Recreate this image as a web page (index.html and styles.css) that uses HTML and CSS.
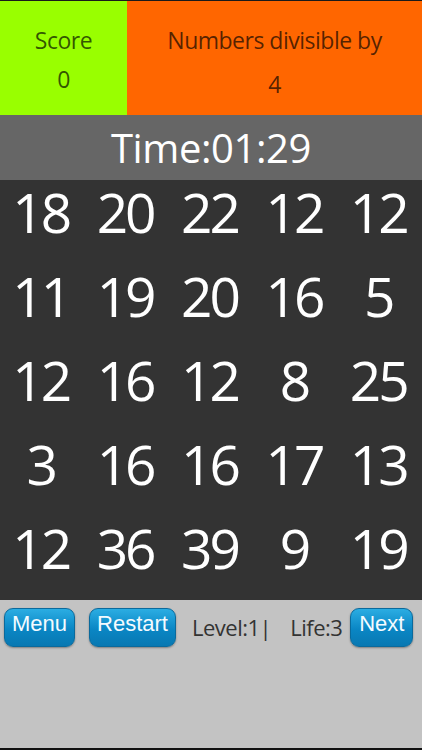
FILE: index.html
```html
<!DOCTYPE html>
<html>
<head>
<meta charset="utf-8">
<link rel="stylesheet" href="styles.css">
</head>
<body>
<div class="app">
  <header class="top">
    <div class="score">
      <div class="line">Score</div>
      <div class="line">0</div>
    </div>
    <div class="target">
      <div class="line">Numbers divisible by</div>
      <div class="line num">4</div>
    </div>
  </header>
  <div class="timer">Time:01:29</div>
  <div class="grid">
    <div class="cell">18</div><div class="cell">20</div><div class="cell">22</div><div class="cell">12</div><div class="cell">12</div>
    <div class="cell">11</div><div class="cell">19</div><div class="cell">20</div><div class="cell">16</div><div class="cell">5</div>
    <div class="cell">12</div><div class="cell">16</div><div class="cell">12</div><div class="cell">8</div><div class="cell">25</div>
    <div class="cell">3</div><div class="cell">16</div><div class="cell">16</div><div class="cell">17</div><div class="cell">13</div>
    <div class="cell">12</div><div class="cell">36</div><div class="cell">39</div><div class="cell">9</div><div class="cell">19</div>
  </div>
  <div class="bar">
    <button class="btn btn-menu">Menu</button>
    <button class="btn btn-restart">Restart</button>
    <span class="info info-level">Level:1|</span>
    <span class="info info-life">Life:3</span>
    <button class="btn btn-next">Next</button>
  </div>
</div>
</body>
</html>
```
FILE: styles.css
```css
html, body {
  margin: 0;
  padding: 0;
}
body {
  width: 422px;
  height: 750px;
  overflow: hidden;
  background: #000;
  font-family: "Open Sans", "DejaVu Sans", sans-serif;
}
.app {
  display: flex;
  flex-direction: column;
  height: 750px;
  border-top: 1px solid #1a1a1a;
  box-sizing: border-box;
}
.top {
  display: flex;
  height: 114px;
}
.score, .target {
  display: flex;
  flex-direction: column;
  align-items: center;
  padding-top: 20px;
  box-sizing: border-box;
  color: rgba(0, 0, 0, 0.68);
  font-size: 23px;
  letter-spacing: -0.5px;
}
.line {
  line-height: 39px;
}
.score {
  width: 127px;
  background: #99ff00;
}
.target {
  flex: 1;
  background: #ff6600;
}
.target .num {
  margin-top: 5px;
}
.timer {
  height: 65px;
  background: #666666;
  color: #fff;
  font-size: 40px;
  letter-spacing: -0.4px;
  line-height: 65px;
  text-align: center;
}
.grid {
  display: grid;
  grid-template-columns: repeat(5, 1fr);
  grid-auto-rows: 84px;
  height: 420px;
  background: #333333;
}
.cell {
  color: #fff;
  font-size: 55px;
  letter-spacing: -3px;
  line-height: 64px;
  text-align: center;
  text-indent: -3px;
}
.bar {
  flex: 1;
  display: flex;
  align-items: flex-start;
  padding-top: 8px;
  padding-left: 4px;
  background: #c3c3c3;
  border-bottom: 2px solid #111;
}
.btn {
  height: 39px;
  box-sizing: border-box;
  padding: 4px 0 11px;
  border: 1px solid #0b6a9c;
  border-radius: 9px;
  background: linear-gradient(#2badE3, #0a86c4 55%, #0878b2);
  box-shadow: 0 1px 2px rgba(0, 0, 0, 0.35);
  color: #f4fbff;
  font-family: "Liberation Sans", Arial, sans-serif;
  font-size: 22px;
  line-height: 22px;
  text-align: center;
}
.btn-menu { width: 71px; }
.btn-restart { width: 87px; margin-left: 14px; }
.btn-next { width: 63px; margin-left: 8px; }
.info {
  margin-top: 4px;
  color: #333;
  font-size: 22px;
  letter-spacing: -0.5px;
  line-height: 30px;
}
.info-level { margin-left: 16px; }
.info-life { margin-left: 19px; }
```
